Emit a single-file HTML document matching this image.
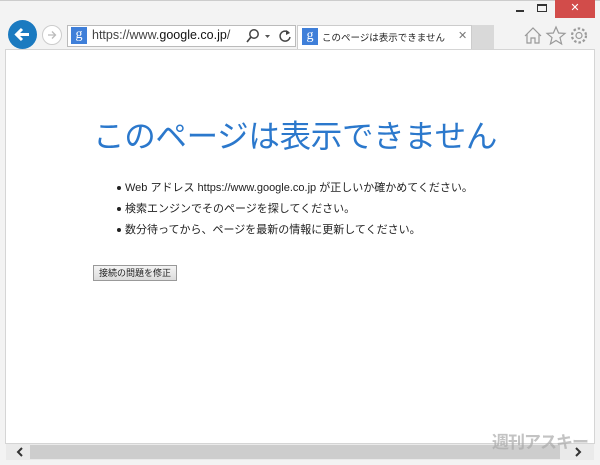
<!DOCTYPE html>
<html><head><meta charset="utf-8"><style>
*{margin:0;padding:0;box-sizing:border-box}
body{width:600px;height:465px;background:#f3f3f3;position:relative;overflow:hidden;font-family:"Liberation Sans","Noto Sans CJK JP",sans-serif}
.a{position:absolute}
.content{left:5px;top:49px;width:590px;height:395px;background:#fff;border:1px solid #d5d5d5}
.title{left:93px;top:111px;font-size:31.5px;color:#2b78cc;white-space:nowrap;letter-spacing:-0.3px}
.li{left:117px;font-size:11px;color:#222;white-space:nowrap}
.li:before{content:"";position:absolute;left:0;top:7px;width:4px;height:4px;border-radius:2px;background:#222}
.li span{margin-left:8px}
</style></head><body>
<div class="a" style="left:0;top:0;width:600px;height:1px;background:#ccc"></div>
<div class="a" style="left:516px;top:10px;width:8px;height:2px;background:#333"></div>
<div class="a" style="left:537px;top:4px;width:10px;height:8px;border:1px solid #333;border-top-width:2px"></div>
<div class="a" style="left:555px;top:0;width:40px;height:18px;background:#d24c4a;color:#fff;font-size:11px;text-align:center;line-height:17px">✕</div>
<div class="a" style="left:8px;top:20px;width:29px;height:29px;border-radius:50%;background:#1b7ac0"></div>
<svg class="a" style="left:8px;top:20px" width="29" height="29"><path d="M21 14.5H9M14 9l-5.5 5.5L14 20" stroke="#fff" stroke-width="3" fill="none"/></svg>
<div class="a" style="left:42px;top:25px;width:20px;height:20px;border-radius:50%;border:1px solid #ccc;background:#fff"></div>
<svg class="a" style="left:42px;top:25px" width="20" height="20"><path d="M6 10h7M10 6.5l3.5 3.5L10 13.5" stroke="#bbb" stroke-width="1.3" fill="none"/></svg>
<div class="a" style="left:67px;top:25px;width:229px;height:22px;border:1px solid #bbb;background:#fff"></div>
<div class="a" style="left:71px;top:27px;width:16px;height:17px;background:#3f7fd9;color:#fff;font-size:14px;text-align:center;line-height:15px;font-family:'Liberation Serif',serif">g</div>
<div class="a" style="left:92px;top:28px;font-size:12.5px;color:#444">https://www.<span style="color:#111">google.co.jp</span>/</div>
<svg class="a" style="left:244px;top:28px" width="50" height="16"><circle cx="10" cy="6" r="4.2" stroke="#444" stroke-width="1.5" fill="none"/><path d="M7 9l-4 5" stroke="#444" stroke-width="1.7"/><path d="M21 7h5l-2.5 3z" fill="#555"/><path d="M45 5a5 5 0 1 0 1 4" stroke="#444" stroke-width="1.5" fill="none"/><path d="M42 2l4 3-4 2z" fill="#444"/></svg>
<div class="a" style="left:297px;top:25px;width:175px;height:25px;background:#fff;border:1px solid #ccc;border-bottom:none"></div>
<div class="a" style="left:302px;top:28px;width:16px;height:17px;background:#3f7fd9;color:#fff;font-size:14px;text-align:center;line-height:15px;font-family:'Liberation Serif',serif">g</div>
<div class="a" style="left:322px;top:30px;font-size:9.5px;color:#222;white-space:nowrap">このページは表示できません</div>
<div class="a" style="left:458px;top:29px;font-size:11px;color:#777">✕</div>
<div class="a" style="left:472px;top:25px;width:22px;height:24px;background:#d9d9d9"></div>
<svg class="a" style="left:522px;top:25px" width="70" height="22"><path d="M3 11L11 3l8 8M5 9v9h4v-5h4v5h4V9" stroke="#999" stroke-width="1.2" fill="none"/><path d="M34 2l2.6 6 6.4.4-5 4.2 1.6 6.4L34 15.5 28.4 19l1.6-6.4-5-4.2 6.4-.4z" stroke="#999" stroke-width="1.2" fill="none"/><circle cx="57" cy="10.5" r="3" stroke="#999" stroke-width="1.2" fill="none"/><circle cx="57" cy="10.5" r="7" stroke="#999" stroke-width="2.2" stroke-dasharray="2.5 2" fill="none"/></svg>
<div class="a content"></div>
<div class="a title">このページは表示できません</div>
<div class="a li" style="top:179px"><span>Web アドレス https://www.google.co.jp が正しいか確かめてください。</span></div>
<div class="a li" style="top:200px"><span>検索エンジンでそのページを探してください。</span></div>
<div class="a li" style="top:221px"><span>数分待ってから、ページを最新の情報に更新してください。</span></div>
<div class="a" style="left:93px;top:265px;width:84px;height:16px;border:1px solid #999;background:linear-gradient(#f4f4f4,#dcdcdc);font-size:9px;color:#222;text-align:center;line-height:14px;white-space:nowrap">接続の問題を修正</div>
<div class="a" style="left:6px;top:444px;width:588px;height:16px;background:#eaeaea"></div>
<div class="a" style="left:30px;top:445px;width:530px;height:14px;background:#cdcdcd"></div>
<svg class="a" style="left:14px;top:446px" width="12" height="12"><path d="M8 2L4 6l4 4" stroke="#333" stroke-width="2" fill="none"/></svg>
<svg class="a" style="left:572px;top:446px" width="12" height="12"><path d="M4 2l4 4-4 4" stroke="#333" stroke-width="2" fill="none"/></svg>
<div class="a" style="left:492px;top:428px;font-size:17px;color:rgba(170,170,170,0.7);font-weight:bold;white-space:nowrap;letter-spacing:-1px">週刊アスキー</div>
</body></html>
